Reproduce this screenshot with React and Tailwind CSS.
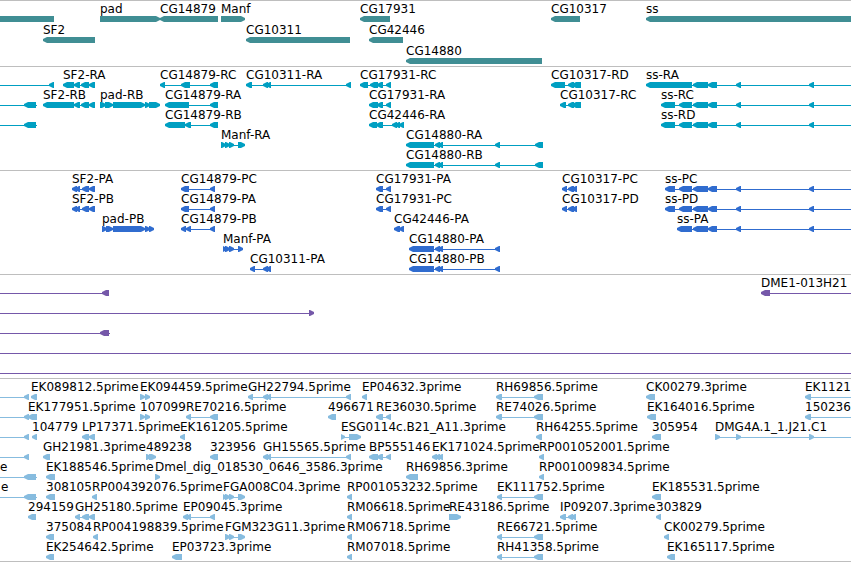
import clsx from "clsx";

// Anything that runs past the visible region is given one of these ends.
const LEFT = -40;
const RIGHT = 4000;
const HEAD = 4;

const fwd = (name, ...exons) => ({ name, strand: "+", exons });
const rev = (name, ...exons) => ({ name, strand: "-", exons });

// exon groups shared by several transcripts
const ssTail = [[693, 708], [708, 717], [736, 741], [809, 814], [RIGHT, RIGHT + 5]];
const cg14880Mid = [[435, 440], [438, 443], [495, 500]];
const rhPair = [[497, 502], [534, 543]];

const genes = [
  [
    rev("", [LEFT, 54]),
    fwd("pad", [100, 160]),
    rev("CG14879", [160, 218]),
    fwd("Manf", [221, 245]),
    rev("CG17931", [360, 390]),
    rev("CG10317", [551, 580]),
    rev("ss", [646, RIGHT]),
  ],
  [rev("SF2", [43, 95]), rev("CG10311", [246, 350]), rev("CG42446", [369, 403])],
  [rev("CG14880", [406, 542])],
];

const transcripts = [
  [
    rev("", [LEFT, LEFT + 5], [49, 54]),
    rev("SF2-RA", [63, 74], [74, 80], [81, 89], [89, 95]),
    rev("CG14879-RC", [160, 165], [181, 190], [210, 218]),
    rev("CG10311-RA", [246, 252], [263, 268], [266, 271], [346, 351]),
    rev("CG17931-RC", [360, 368], [370, 378], [377, 383], [386, 391]),
    rev("CG10317-RD", [551, 565], [568, 574], [572, 581]),
    rev("ss-RA", [646, 692], ...ssTail),
  ],
  [
    rev("", [LEFT, LEFT + 5], [24, 36], [36, 37]),
    rev("SF2-RB", [43, 74], [74, 80], [81, 89], [89, 95]),
    fwd("pad-RB", [100, 106], [105, 113], [113, 145], [145, 150], [149, 160]),
    rev("CG14879-RA", [165, 189], [210, 218]),
    rev("CG17931-RA", [369, 378], [377, 383], [386, 391]),
    rev("CG10317-RC", [560, 566], [568, 574], [572, 581]),
    rev("ss-RC", [661, 675], [679, 692], ...ssTail),
  ],
  [
    rev("", [LEFT, LEFT + 5], [24, 36], [36, 37]),
    rev("CG14879-RB", [165, 185], [185, 191], [210, 218]),
    rev("CG42446-RA", [369, 377], [376, 383], [392, 397], [395, 400], [399, 404]),
    rev("ss-RD", [661, 675], [679, 692], ...ssTail),
  ],
  [
    fwd("Manf-RA", [221, 226], [225, 230], [229, 234], [238, 245]),
    rev("CG14880-RA", [406, 434], ...cg14880Mid, [535, 543]),
  ],
  [rev("CG14880-RB", [406, 434], ...cg14880Mid, [535, 543])],
];

const proteins = [
  [
    rev("SF2-PA", [72, 77], [75, 80], [82, 89], [89, 95]),
    rev("CG14879-PC", [181, 189], [210, 215]),
    rev("CG17931-PA", [376, 383], [386, 391]),
    rev("CG10317-PC", [562, 567], [568, 574], [572, 577]),
    rev("ss-PC", [665, 675], [679, 692], ...ssTail),
  ],
  [
    rev("SF2-PB", [72, 77], [75, 80], [82, 89], [89, 95]),
    rev("CG14879-PA", [181, 189], [210, 215]),
    rev("CG17931-PC", [376, 383], [386, 391]),
    rev("CG10317-PD", [562, 567], [568, 574], [572, 577]),
    rev("ss-PD", [665, 675], [679, 692], ...ssTail),
  ],
  [
    fwd("pad-PB", [102, 107], [106, 113], [113, 145], [145, 150], [149, 154]),
    rev("CG14879-PB", [181, 186], [186, 191], [210, 215]),
    rev("CG42446-PA", [394, 400], [399, 404]),
    rev("ss-PA", [677, 692], ...ssTail),
  ],
  [
    fwd("Manf-PA", [223, 227], [225, 230], [229, 234], [238, 243]),
    rev("CG14880-PA", [409, 434], ...cg14880Mid),
  ],
  [
    rev("CG10311-PA", [250, 255], [263, 268], [266, 271]),
    rev("CG14880-PB", [409, 434], ...cg14880Mid),
  ],
];

const clones = [
  [
    rev("", [LEFT, LEFT + 5], [102, 109]),
    rev("DME1-013H21", [761, 770], [RIGHT, RIGHT + 5]),
  ],
  [fwd("", [LEFT, LEFT + 5], [309, 314])],
  [rev("", [LEFT, LEFT + 5], [100, 109], [109, 110])],
  [rev("", [LEFT, LEFT + 5], [RIGHT, RIGHT + 5])],
  [rev("", [LEFT, LEFT + 5], [RIGHT, RIGHT + 5])],
];

const ests = [
  [
    rev("", [LEFT, LEFT + 5], [24, 29]),
    rev("EK089812.5prime", [31, 37]),
    fwd("EK094459.5prime", [140, 145], [145, 150]),
    rev("GH22794.5prime", [248, 253], [263, 268], [266, 271], [346, 351]),
    rev("EP04632.3prime", [362, 367]),
    rev("RH69856.5prime", [496, 502], [534, 543]),
    rev("CK00279.3prime", [646, 655]),
    rev("EK1121", [805, 811], [RIGHT, RIGHT + 5]),
  ],
  [
    rev("", [LEFT, LEFT + 5], [24, 29]),
    rev("EK177951.5prime", [28, 37]),
    fwd("107099", [140, 145], [145, 150]),
    rev("RE70216.5prime", [186, 191], [210, 218]),
    rev("496671", [328, 336]),
    rev("RE36030.5prime", [376, 383], [386, 391]),
    rev("RE74026.5prime", [496, 502], [534, 543]),
    rev("EK164016.5prime", [647, 656]),
    rev("150236", [805, 811], [RIGHT, RIGHT + 5]),
  ],
  [
    rev("", [LEFT, LEFT + 5], [24, 29]),
    rev("104779", [32, 37]),
    rev("LP17371.5prime", [82, 89], [89, 95]),
    rev("EK161205.5prime", [180, 185]),
    fwd("ESG0114c.B21_A11.3prime", [341, 345], [349, 361]),
    rev("RH64255.5prime", [536, 542]),
    rev("305954", [652, 661]),
    fwd("DMG4A.1_1.J21.C1", [715, 720], [736, 741], [809, 814], [RIGHT, RIGHT + 5]),
  ],
  [
    rev("", [LEFT, LEFT + 5], [24, 29]),
    rev("GH21981.3prime", [43, 50]),
    fwd("489238", [146, 151], [149, 156]),
    rev("323956", [210, 218]),
    rev("GH15565.5prime", [263, 268], [266, 271], [346, 351]),
    rev("BP555146", [369, 378], [377, 383], [386, 391]),
    rev("EK171024.5prime", [432, 437], [435, 440], [438, 443]),
    rev("RP001052001.5prime", [539, 544]),
  ],
  [
    { ...rev("e", [LEFT, LEFT + 5], [24, 36], [36, 37]), labelX: 0 },
    rev("EK188546.5prime", [46, 55]),
    fwd("Dmel_dig_018530_0646_3586.3prime", [155, 160]),
    rev("RH69856.3prime", [406, 418]),
    rev("RP001009834.5prime", [539, 544]),
  ],
  [
    { ...rev("e", [LEFT, LEFT + 5], [24, 36], [36, 37]), labelX: 1 },
    rev("308105", [46, 55]),
    rev("RP004392076.5prime", [92, 97]),
    fwd("FGA008C04.3prime", [223, 227], [225, 230], [229, 234], [238, 245]),
    rev("RP001053232.5prime", [347, 352]),
    rev("EK111752.5prime", ...rhPair),
    rev("EK185531.5prime", [652, 661]),
  ],
  [
    rev("294159", [28, 36]),
    rev("GH25180.5prime", [75, 80], [82, 89], [89, 95]),
    rev("EP09045.3prime", [183, 188], [186, 191], [210, 215]),
    rev("RM06618.5prime", [347, 352]),
    fwd("RE43186.5prime", [449, 461]),
    rev("IP09207.3prime", [560, 566], [568, 573], [571, 576]),
    rev("303829", [656, 661]),
  ],
  [
    rev("375084", [46, 54]),
    rev("RP004198839.5prime", [93, 98]),
    fwd("FGM323G11.3prime", [225, 230], [229, 234], [238, 245]),
    rev("RM06718.5prime", [347, 352]),
    rev("RE66721.5prime", ...rhPair),
    rev("CK00279.5prime", [664, 669]),
  ],
  [
    rev("EK254642.5prime", [46, 54]),
    rev("EP03723.3prime", [172, 182]),
    rev("RM07018.5prime", [347, 352]),
    rev("RH41358.5prime", ...rhPair),
    rev("EK165117.5prime", [667, 675]),
  ],
];

const tracks = [
  { id: "Genes", rows: genes, color: "fill-[#408e94]", rowClass: "h-[21px]", className: "pb-px" },
  { id: "Transcripts", rows: transcripts, color: "fill-[#009fc2]", rowClass: "h-5", className: "pb-0.5" },
  { id: "Proteins", rows: proteins, color: "fill-[#306ccf]", rowClass: "h-5", className: "pb-0.5" },
  { id: "Clones", rows: clones, color: "fill-[#7558a9]", rowClass: "h-5", className: "pb-0.5" },
  { id: "ESTs", rows: ests, color: "fill-[#87bcdf]", rowClass: "h-5", className: "border-b pb-px" },
];

// A box with a blunt arrow head on the side the strand reads towards.
function Exon({ start, end, strand }) {
  if (end - start < 2) return null;
  const head = Math.min(HEAD, end - start);
  const tip = strand === "+" ? end : start;
  const tail = strand === "+" ? start : end;
  const neck = strand === "+" ? end - head : start + head;
  return <polygon points={`${tail},14 ${neck},14 ${tip},16 ${tip},18 ${neck},20 ${tail},20`} />;
}

function Feature({ feature }) {
  const { exons, strand } = feature;
  const first = exons[0][0];
  const last = exons[exons.length - 1][1];
  return (
    <g>
      <rect x={first} y="17" width={last - first} height="1" />
      {exons.map(([start, end]) => (
        <Exon key={start} start={start} end={end} strand={strand} />
      ))}
    </g>
  );
}

function Row({ features, color, className }) {
  return (
    <div className={clsx("relative w-full", className)}>
      <svg className={clsx("block h-full w-full", color)} aria-hidden="true">
        {features.map((feature, i) => (
          <Feature key={i} feature={feature} />
        ))}
      </svg>
      {features.map(
        (feature, i) =>
          feature.name && (
            <span
              key={i}
              className="absolute top-0 whitespace-nowrap text-xs leading-[14px] text-black"
              style={{ left: feature.labelX ?? feature.exons[0][0] }}
            >
              {feature.name}
            </span>
          ),
      )}
    </div>
  );
}

export default function App() {
  return (
    <main className="w-full overflow-hidden bg-white font-['DejaVu_Sans',sans-serif]">
      {tracks.map((track) => (
        <section key={track.id} aria-label={track.id} className={clsx("border-t border-[#bebebe] pt-px", track.className)}>
          {track.rows.map((features, i) => (
            <Row key={i} features={features} color={track.color} className={track.rowClass} />
          ))}
        </section>
      ))}
    </main>
  );
}
